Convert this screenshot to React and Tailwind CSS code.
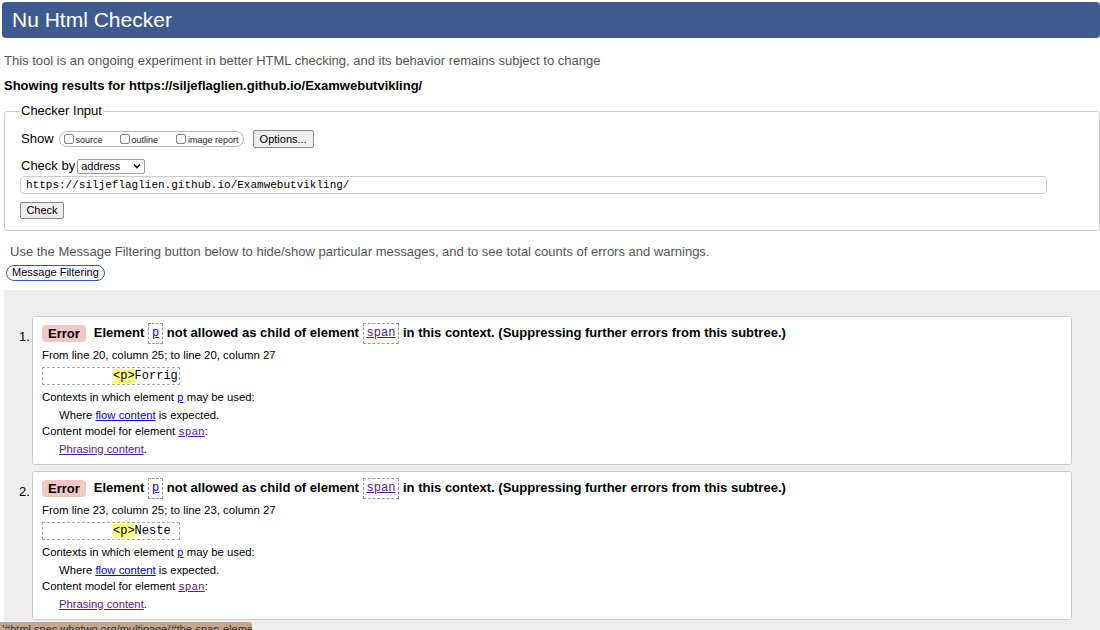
export default function App() {
  const sans = { fontFamily: '"Liberation Sans", Arial, sans-serif' };
  const mono = { fontFamily: '"Liberation Mono", "Courier New", monospace' };
  const Code = ({ children, purple }) => (
    <span className="inline-block border border-dashed border-[#999] px-[3px] leading-[19px] text-[12px] font-normal align-middle" style={mono}>
      <span className={`underline ${purple ? 'text-[#551a8b]' : 'text-[#0000ee]'}`}>{children}</span>
    </span>
  );
  const Card = ({ n, line, word }) => (
    <li className="relative bg-white border border-[#ccc] rounded-[3px] ml-[28px] mr-[28px] mb-[6px] pl-[9px] pr-2 pt-[6px] pb-[7px]">
      <span className="absolute left-[-14px] top-[10px] text-[13px]">{n}.</span>
      <div className="flex items-center text-[13px] font-bold h-[21px]">
        <span className="bg-[#f4c7c7] rounded-[4px] px-[6px] leading-[17px] mr-[8px]">Error</span>
        <span className="whitespace-nowrap">Element <Code>p</Code> not allowed as child of element <Code purple>span</Code> in this context. (Suppressing further errors from this subtree.)</span>
      </div>
      <div className="text-[11.4px] leading-[14px] mt-[4px]">From line {line}, column 25; to line {line}, column 27</div>
      <div className="mt-[5px] w-[138px] h-[18px] border border-dashed border-[#aaa] text-[12px] leading-[16px] pl-[70px] whitespace-nowrap" style={mono}>
        <span className="bg-[#ffff80]">&lt;p&gt;</span>{word}
      </div>
      <div className="text-[11.3px] leading-[16.5px] mt-[4px]">
        <div>Contexts in which element <span className="underline text-[#0000ee] text-[11px]" style={mono}>p</span> may be used:</div>
        <div className="pl-[17px]">Where <span className="underline text-[#0000ee]">flow content</span> is expected.</div>
        <div>Content model for element <span className="underline text-[#551a8b] text-[11px]" style={mono}>span</span>:</div>
        <div className="pl-[17px]"><span className="underline text-[#551a8b]">Phrasing content</span>.</div>
      </div>
    </li>
  );
  const Box = ({ className = '' }) => (
    <span className={`inline-block w-[10px] h-[10px] border border-[#888] rounded-[2px] bg-white mr-[2px] ${className}`}></span>
  );
  return (
    <div className="relative w-[1100px] h-[630px] overflow-hidden bg-white text-black" style={sans}>
      <div className="ml-[2px] mt-[2px] h-[36px] bg-[#3e5b91] rounded-[4px] pl-[10px] text-white text-[21px] leading-[36px]">Nu Html Checker</div>
      <p className="ml-[4px] mt-[15px] text-[13px] leading-[16px] text-[#555]">This tool is an ongoing experiment in better HTML checking, and its behavior remains subject to change</p>
      <p className="ml-[4px] mt-[9px] text-[13px] leading-[16px] font-bold">Showing results for https://siljeflaglien.github.io/Examwebutvikling/</p>
      <fieldset className="ml-[4px] mt-[9px] border border-[#ccc] rounded-[3px] pl-[16px] pr-[52px] pb-[11px] pt-[8px]">
        <legend className="text-[13px] px-[1px] ml-[-1px] leading-[16px]">Checker Input</legend>
        <div className="flex items-center h-[20px] mt-[2px]">
          <span className="text-[13px]">Show</span>
          <span className="ml-[5px] flex items-center h-[16px] border border-[#bbb] rounded-full px-[4px] text-[9px] text-[#222]">
            <Box /><span className="pt-[3px]">source</span>
            <Box className="ml-[17px]" /><span className="pt-[3px]">outline</span>
            <Box className="ml-[18px]" /><span className="pt-[3px]">image report</span>
          </span>
          <span className="ml-[9px] h-[18px] border border-[#888] rounded-[2px] bg-[#eee] px-[6px] text-[11px] leading-[16px]">Options...</span>
        </div>
        <div className="flex items-center h-[18px] mt-[8px]">
          <span className="text-[13px]">Check by</span>
          <span className="ml-[2px] w-[68px] h-[15px] border border-[#999] rounded-[2px] flex items-center justify-between px-[3px] text-[11px]">
            address
            <svg width="8" height="6" viewBox="0 0 8 6"><path d="M1 1.5 L4 4.5 L7 1.5" fill="none" stroke="#111" strokeWidth="1.6" /></svg>
          </span>
        </div>
        <div className="mt-[1px] ml-[-1px] h-[18px] border border-[#ccc] rounded-[4px] pl-[5px] text-[11px] leading-[16px]" style={mono}>https://siljeflaglien.github.io/Examwebutvikling/</div>
        <div className="mt-[8px] ml-[-1px] w-[44px] h-[17px] border border-[#888] rounded-[2px] bg-[#eee] text-[11px] leading-[15px] text-center">Check</div>
      </fieldset>
      <p className="ml-[10px] mt-[13px] text-[13px] leading-[15px] text-[#555]">Use the Message Filtering button below to hide/show particular messages, and to see total counts of errors and warnings.</p>
      <div className="ml-[6px] mt-[6px] inline-block h-[16px] border-[1.5px] border-[#2f5fb3] rounded-full px-[5px] text-[11px] leading-[13px]">Message Filtering</div>
      <div className="ml-[4px] mt-[7px] bg-[#eeeeee] h-[400px] pt-[26px]">
        <ol>
          <Card n={1} line={20} word="Forrig" />
          <Card n={2} line={23} word="Neste" />
        </ol>
      </div>
      <div className="absolute left-0 top-[622px] w-[252px] h-[8px] bg-[#c4a68c] rounded-tr-[3px] text-[11px] leading-[14px] pl-[2px] text-[#333] whitespace-nowrap overflow-hidden">'#html.spec.whatwg.org/multipage/#the-span-element</div>
    </div>
  );
}
